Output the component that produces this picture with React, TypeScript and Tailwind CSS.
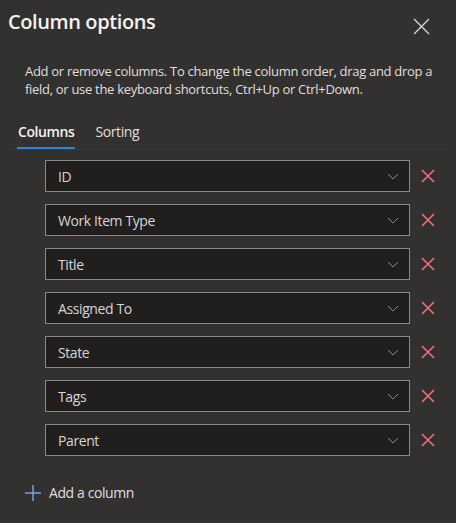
import React from 'react';

const columns = ['ID', 'Work Item Type', 'Title', 'Assigned To', 'State', 'Tags', 'Parent'];

function Chevron() {
  return (
    <svg width="12" height="12" viewBox="0 0 12 12" fill="none">
      <path d="M1 4l5 5 5-5" stroke="#8a8886" strokeWidth="1" />
    </svg>
  );
}

function RemoveIcon() {
  return (
    <svg width="14" height="14" viewBox="0 0 14 14" fill="none">
      <path d="M1 1l12 12M13 1L1 13" stroke="#f1707b" strokeWidth="1.6" />
    </svg>
  );
}

function ColumnRow({ name }: { name: string }) {
  return (
    <div className="flex items-center">
      <div className="flex items-center justify-between w-[365px] h-[32px] border border-[#8a8886] bg-[#201f1e] pl-[12px] pr-[10px]">
        <span className="text-[14px] tracking-[-0.4px] text-[#d8d6d4]">{name}</span>
        <Chevron />
      </div>
      <button className="ml-[10px] w-[16px] h-[16px] flex items-center justify-center">
        <RemoveIcon />
      </button>
    </div>
  );
}

export default function App() {
  return (
    <div className="w-[456px] h-[523px] bg-[#323130] text-white overflow-hidden" style={{ fontFamily: '"Open Sans", "Noto Sans", sans-serif' }}>
      <div className="flex items-start justify-between pl-[8px] pr-[26px] pt-[8px]">
        <h2 className="text-[20px] font-semibold leading-[28px] tracking-[-0.4px] text-[#f3f2f1]">Column options</h2>
        <button className="mt-[10px]">
          <svg width="17" height="17" viewBox="0 0 17 17" fill="none">
            <path d="M1 1l15 15M16 1L1 16" stroke="#e1dfdd" strokeWidth="1.2" />
          </svg>
        </button>
      </div>
      <p className="mt-[26px] pl-[25px] pr-[14px] text-[13px] leading-[18px] tracking-[-0.3px] text-[#e1dfdd]">
        Add or remove columns. To change the column order, drag and drop a field, or use the keyboard shortcuts, Ctrl+Up or Ctrl+Down.
      </p>
      <div className="mt-[24px] mx-[8px] flex items-end gap-[20px] border-b border-[#3b3a39] pl-[9px]">
        <div className="flex flex-col items-center">
          <span className="text-[14px] font-semibold leading-[20px] tracking-[-0.4px] text-[#f3f2f1] px-[1px]">Columns</span>
          <div className="mt-[5px] h-[2px] w-full bg-[#2886de]" />
        </div>
        <span className="text-[14px] leading-[20px] tracking-[-0.4px] text-[#e1dfdd] pb-[7px]">Sorting</span>
      </div>
      <div className="mt-[10px] ml-[45px] flex flex-col gap-[12px]">
        {columns.map((c) => (
          <ColumnRow key={c} name={c} />
        ))}
      </div>
      <button className="mt-[26px] ml-[25px] flex items-center gap-[8px]">
        <svg width="16" height="16" viewBox="0 0 16 16" fill="none">
          <path d="M8 0v16M0 8h16" stroke="#6ea4e0" strokeWidth="1.5" />
        </svg>
        <span className="text-[14px] tracking-[-0.4px] text-[#e1dfdd]">Add a column</span>
      </button>
    </div>
  );
}
